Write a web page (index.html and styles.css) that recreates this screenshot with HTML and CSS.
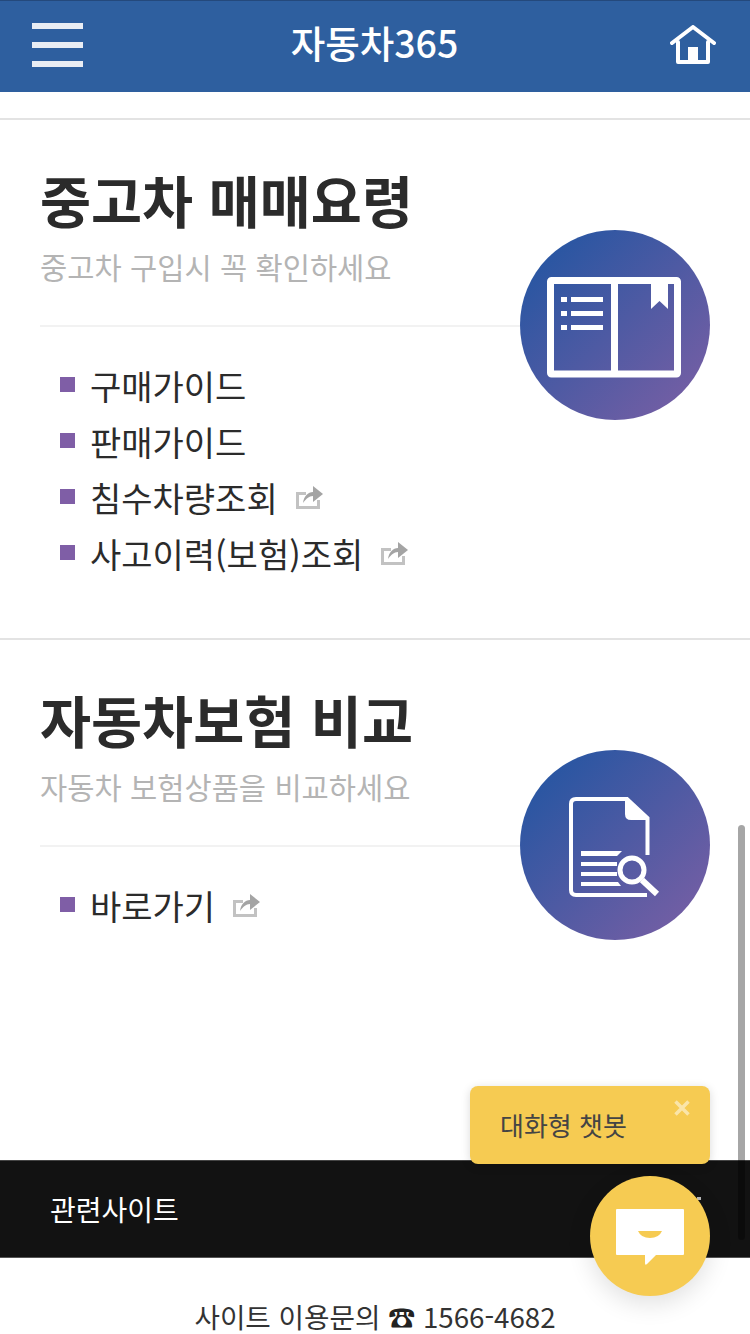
FILE: index.html
```html
<!DOCTYPE html>
<html lang="ko">
<head>
    <meta charset="UTF-8">
    <meta name="viewport" content="width=device-width, initial-scale=1.0">
    <title>자동차365</title>
    <link rel="stylesheet" href="styles.css">
</head>
<body>
    <div class="page">
        <header class="top-bar">
            <div class="menu-btn"><span></span><span></span><span></span></div>
            <h1>자동차365</h1>
            <svg class="home-icon" viewBox="0 0 46 40" fill="none" stroke="#fff" stroke-width="4" stroke-linecap="round" stroke-linejoin="round">
                <path d="M2 18 L23 2 L44 18"/>
                <path d="M8 17 V37 H38 V17"/>
                <rect x="18" y="22" width="10" height="15" fill="#fff" stroke="none"/>
            </svg>
        </header>

        <main>
            <section class="card">
                <h2>중고차 매매요령</h2>
                <p class="sub">중고차 구입시 꼭 확인하세요</p>
                <ul class="links">
                    <li>구매가이드</li>
                    <li>판매가이드</li>
                    <li>침수차량조회
                        <svg class="ext-icon" viewBox="0 0 28 26"><path class="ext-box" d="M1 8 H11 V11 H4 V22 H22 V16 H25 V25 H1 Z"/><path class="ext-arrow" d="M8 19 C9 12 13 8 18 8 V2 L28 10 L18 18 V12 C14 12 11 15 8 19 Z"/></svg>
                    </li>
                    <li>사고이력(보험)조회
                        <svg class="ext-icon" viewBox="0 0 28 26"><path class="ext-box" d="M1 8 H11 V11 H4 V22 H22 V16 H25 V25 H1 Z"/><path class="ext-arrow" d="M8 19 C9 12 13 8 18 8 V2 L28 10 L18 18 V12 C14 12 11 15 8 19 Z"/></svg>
                    </li>
                </ul>
                <div class="badge">
                    <svg viewBox="0 0 190 190" fill="none">
                        <rect x="30.500" y="50.500" width="127" height="93.500" rx="1" stroke="#fff" stroke-width="7"/>
                        <rect x="91" y="50" width="7" height="94" fill="#fff"/>
                        <path d="M131 50 H148 V79 L139.500 71 L131 79 Z" fill="#fff"/>
                        <path d="M41 67 H47 V72 H41 Z M41 81 H47 V86 H41 Z M41 95 H47 V100 H41 Z M51 67 H83 V72 H51 Z M51 81 H83 V86 H51 Z M51 95 H83 V100 H51 Z" fill="#fff"/>
                    </svg>
                </div>
            </section>

            <section class="card">
                <h2>자동차보험 비교</h2>
                <p class="sub">자동차 보험상품을 비교하세요</p>
                <ul class="links">
                    <li>바로가기
                        <svg class="ext-icon" viewBox="0 0 28 26"><path class="ext-box" d="M1 8 H11 V11 H4 V22 H22 V16 H25 V25 H1 Z"/><path class="ext-arrow" d="M8 19 C9 12 13 8 18 8 V2 L28 10 L18 18 V12 C14 12 11 15 8 19 Z"/></svg>
                    </li>
                </ul>
                <div class="badge">
                    <svg viewBox="0 0 190 190" fill="none">
                        <path d="M127.500 105 V68 L107 49 H56 Q51 49 51 54 V140 Q51 145 56 145 H127" stroke="#fff" stroke-width="4"/>
                        <path d="M105 49 L129 68 V70 H111 Q105 70 105 64 Z" fill="#fff"/>
                        <path d="M61 101 H102 L97 106 H61 Z M61 112 H97 V116 H61 Z M61 122 H97 V126 H61 Z M61 132 H98 L101 136 H61 Z" fill="#fff"/>
                        <circle cx="112" cy="120" r="12" stroke="#fff" stroke-width="5"/>
                        <path d="M122 130 L137 144" stroke="#fff" stroke-width="6"/>
                    </svg>
                </div>
            </section>
        </main>

        <div class="related"><span>관련사이트</span><i class="related-plus"></i></div>
        <div class="contact">사이트 이용문의 <span class="phone">☎</span> 1566-4682</div>

        <div class="scroll-thumb"></div>

        <div class="chat-tip">
            대화형 챗봇
            <svg class="chat-close" viewBox="0 0 16 16" stroke="#fff" stroke-width="3.500"><path d="M1.500 1.500 L14.500 14.500 M14.500 1.500 L1.500 14.500"/></svg>
        </div>
        <div class="chat-btn">
            <svg viewBox="0 0 68 58">
                <path d="M1 0 H67 Q68 0 68 1 V45 Q68 46 67 46 H40 L31 55 Q29 57 29 54 V46 H1 Q0 46 0 45 V1 Q0 0 1 0 Z" fill="#fff"/>
                <path d="M22 22 H46 Q43 29 34 29 Q25 29 22 22 Z" fill="#f6cb52"/>
            </svg>
        </div>
    </div>
</body>
</html>
```

FILE: styles.css
```css
* {
    box-sizing: border-box;
}

body {
    margin: 0;
    font-family: "Noto Sans CJK KR", "Noto Sans", sans-serif;
    background: #fff;
    color: #2b2b2b;
}

.page {
    position: relative;
    width: 750px;
    height: 1334px;
    overflow: hidden;
}

.top-bar {
    height: 92px;
    background: #2e5f9f;
    border-top: 1px solid #24497c;
    display: flex;
    align-items: center;
    justify-content: space-between;
    padding: 0 34px 3px 32px;
}

.top-bar h1 {
    margin: 0 4px 8px 0;
    font-size: 37.500px;
    font-weight: 500;
    color: #fff;
}

.menu-btn {
    width: 51px;
    display: flex;
    flex-direction: column;
    gap: 13px;
}

.menu-btn span {
    height: 6px;
    background: #e9edf4;
}

.home-icon {
    width: 46px;
    height: 40px;
}

main {
    padding-top: 26px;
}

.card {
    position: relative;
    height: 520px;
    border-top: 2px solid #e3e3e3;
    padding: 40px 40px 0;
}

.card h2 {
    margin: 0;
    font-size: 55.500px;
    line-height: 78px;
    font-weight: 700;
    color: #2b2b2b;
}

.sub {
    margin: 0;
    padding: 7px 0 36px;
    font-size: 29.600px;
    line-height: 44px;
    color: #b4b4b4;
    border-bottom: 2px solid #f2f2f2;
}

.links {
    list-style: none;
    margin: 0;
    padding: 30px 0 0 20px;
}

.links li {
    display: flex;
    align-items: center;
    height: 56px;
    font-size: 34px;
    color: #2b2b2b;
}

.links li::before {
    content: "";
    width: 15px;
    height: 15px;
    background: #7f5ea6;
    margin: -2px 15px 0 0;
}

.ext-icon {
    width: 28px;
    height: 26px;
    margin-left: 17px;
}

.ext-box {
    fill: #c2c2c2;
}

.ext-arrow {
    fill: #a4a4a4;
}

.badge {
    position: absolute;
    top: 110px;
    right: 40px;
    width: 190px;
    height: 190px;
    border-radius: 50%;
    background: linear-gradient(135deg, #2a56a2 14%, #725ea4 88%);
}

.badge svg {
    display: block;
    width: 190px;
    height: 190px;
}

.related {
    margin-top: 2px;
    height: 98px;
    background: #121212;
    border-top: 1px solid #444;
    border-bottom: 1px solid #555;
    display: flex;
    align-items: center;
    padding-left: 50px;
    font-size: 28px;
    color: #fff;
}

.related-plus {
    position: absolute;
    left: 697px;
    top: 1197px;
    width: 4px;
    height: 3px;
    background: #bbb;
}

.contact {
    padding-top: 40px;
    font-size: 27.700px;
    line-height: 36px;
    text-align: center;
    color: #333;
}

.phone {
    font-weight: 700;
    font-size: 27px;
    color: #222;
}

.scroll-thumb {
    position: absolute;
    left: 738px;
    top: 825px;
    width: 7px;
    height: 415px;
    border-radius: 4px;
    background: rgba(0, 0, 0, 0.35);
}

.chat-tip {
    position: absolute;
    left: 470px;
    top: 1086px;
    width: 240px;
    height: 78px;
    padding: 20px 0 0 30px;
    border-radius: 8px;
    background: #f6cb52;
    box-shadow: 0 2px 10px rgba(0, 0, 0, 0.15);
    font-size: 26px;
    line-height: 38px;
    color: #444;
}

.chat-close {
    position: absolute;
    right: 20px;
    top: 14px;
    width: 16px;
    height: 16px;
    opacity: 0.5;
}

.chat-btn {
    position: absolute;
    left: 590px;
    top: 1176px;
    width: 120px;
    height: 120px;
    border-radius: 50%;
    background: #f6cb52;
    box-shadow: 0 8px 24px rgba(0, 0, 0, 0.12);
    display: flex;
    align-items: center;
    justify-content: center;
}

.chat-btn svg {
    width: 68px;
    height: 58px;
    margin-top: 4px;
}
```
